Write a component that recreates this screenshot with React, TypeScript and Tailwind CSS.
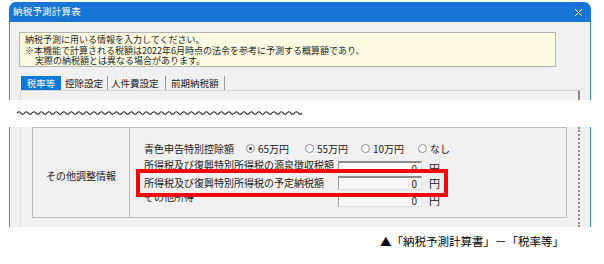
import React from 'react';

const jp = "font-[Noto_Sans_CJK_JP,Noto_Sans,sans-serif]";

function Radio({ checked }: { checked?: boolean }) {
    return (
        <span className="w-[9px] h-[9px] rounded-full border border-[#8c8c8c] bg-white flex items-center justify-center shrink-0">
            {checked && <span className="w-[3px] h-[3px] rounded-full bg-[#222]"></span>}
        </span>
    );
}

function YenInput() {
    return (
        <div className="flex items-center">
            <div className="w-[84px] h-[14px] border-t-2 border-l border-b border-r border-t-[#8c8c8c] border-l-[#9a9a9a] border-b-[#dedede] border-r-[#dedede] bg-[#f9f9f9] text-right pr-[4px] text-[10px] leading-[11px] text-[#222]">0</div>
            <span className="ml-[7px] text-[11px] leading-[14px] text-[#222]">円</span>
        </div>
    );
}

function Wave() {
    const seg = Array.from({ length: 75 }, () => "t 3.75 0").join(" ");
    return (
        <svg width="562" height="6" viewBox="0 0 562 6" className="block">
            <path d={`M1 3 q 1.875 -2.6 3.75 0 ${seg}`} fill="none" stroke="#111" strokeWidth="1.1" />
        </svg>
    );
}

export default function App() {
    return (
        <div className={`w-[604px] h-[264px] bg-white overflow-hidden ${jp}`}>
            {/* top part of the dialog */}
            <div className="ml-[9px] mt-[2px] w-[582px] h-[98px] flex flex-col">
                <div className="h-[20px] bg-[#1775d5] rounded-t-[7px] flex items-center justify-between pl-[4px] pr-[8px]">
                    <span className="text-white text-[9.5px] leading-none tracking-[0.2px]">納税予測計算表</span>
                    <svg width="9" height="9" viewBox="0 0 9 9"><path d="M1 1 L8 8 M8 1 L1 8" stroke="#fff" strokeWidth="1" /></svg>
                </div>
                <div className="flex-1 bg-[#f0f0f0] border-l border-r border-[#3a8ee6] flex flex-col pt-[10px]">
                    <div className="ml-[9px] w-[537px] h-[35px] bg-[#fdfde2] border border-[#b4b4b4] pl-[5px] pt-[2px] text-[9px] leading-[10.5px] text-[#222]">
                        <div>納税予測に用いる情報を入力してください。</div>
                        <div>※本機能で計算される税額は2022年6月時点の法令を参考に予測する概算額であり、</div>
                        <div className="pl-[10px]">実際の納税額とは異なる場合があります。</div>
                    </div>
                    <div className="ml-[11px] mt-[9px] h-[14px] flex text-[9.5px] leading-[14px] text-[#222]">
                        <div className="w-[40px] bg-[#0a78d8] text-white text-center">税率等</div>
                        <div className="w-[47px] pl-[4px] border-r border-[#9a9a9a]">控除設定</div>
                        <div className="w-[58px] pl-[3px] border-r border-[#9a9a9a]">人件費設定</div>
                        <div className="w-[59px] pl-[5px] border-r border-[#9a9a9a]">前期納税額</div>
                    </div>
                    <div className="flex-1 ml-[10px] w-[560px] border-t border-[#d4d4d4] border-l border-l-[#dadada] border-r-2 border-r-[#8c8c8c]"></div>
                </div>
            </div>

            {/* cut marker */}
            <div className="ml-[16px] mt-[10px] h-[6px]">
                <Wave />
            </div>

            {/* bottom part of the dialog */}
            <div className="ml-[9px] mt-[11px] w-[582px] h-[100px] bg-[#f0f0f0] border-l border-r border-[#3a8ee6]">
                <div className="ml-[10px] w-[560px] h-full border-l border-dotted border-l-[#cfcfcf] border-r-2 border-r-[#8c8c8c] pl-[11px]">
                    <div className="w-[535px] h-[91px] border border-[#bdbdbd] flex text-[#222]">
                        <div className="w-[97px] border-r border-[#bdbdbd] flex items-center justify-center pt-[5px] text-[10px]">
                            その他調整情報
                        </div>
                        <div className="flex-1 flex flex-col pt-[12px] text-[10px]">
                            <div className="h-[16px] pl-[14px] flex items-center">
                                <span className="w-[102px]">青色申告特別控除額</span>
                                <div className="w-[59px] flex items-center gap-[3px]"><Radio checked /><span>65万円</span></div>
                                <div className="w-[56px] flex items-center gap-[3px]"><Radio /><span>55万円</span></div>
                                <div className="w-[57px] flex items-center gap-[3px]"><Radio /><span>10万円</span></div>
                                <div className="flex items-center gap-[3px]"><Radio /><span>なし</span></div>
                            </div>
                            <div className="h-[13px] overflow-hidden">
                                <div className="pl-[14px] pt-[1px] flex items-start">
                                    <span className="w-[194px] leading-[16px]">所得税及び復興特別所得税の源泉徴収税額</span>
                                    <div className="pt-[4px]"><YenInput /></div>
                                </div>
                            </div>
                            <div className="ml-[6px] w-[312px] h-[28px] border-4 border-[#ee0a0a] pl-[4px] flex items-center">
                                <span className="w-[194px] leading-[16px]">所得税及び復興特別所得税の予定納税額</span>
                                <YenInput />
                            </div>
                            <div className="flex-1 overflow-hidden">
                                <div className="pl-[14px] -mt-[8px] flex items-start">
                                    <span className="w-[194px] leading-[16px]">その他所得</span>
                                    <div className="pt-[4px]"><YenInput /></div>
                                </div>
                            </div>
                        </div>
                    </div>
                </div>
            </div>

            <div className="mt-[6px] pr-[40px] text-right text-[11.5px] leading-[16px] text-black">
                ▲「納税予測計算書」－「税率等」
            </div>
        </div>
    );
}
